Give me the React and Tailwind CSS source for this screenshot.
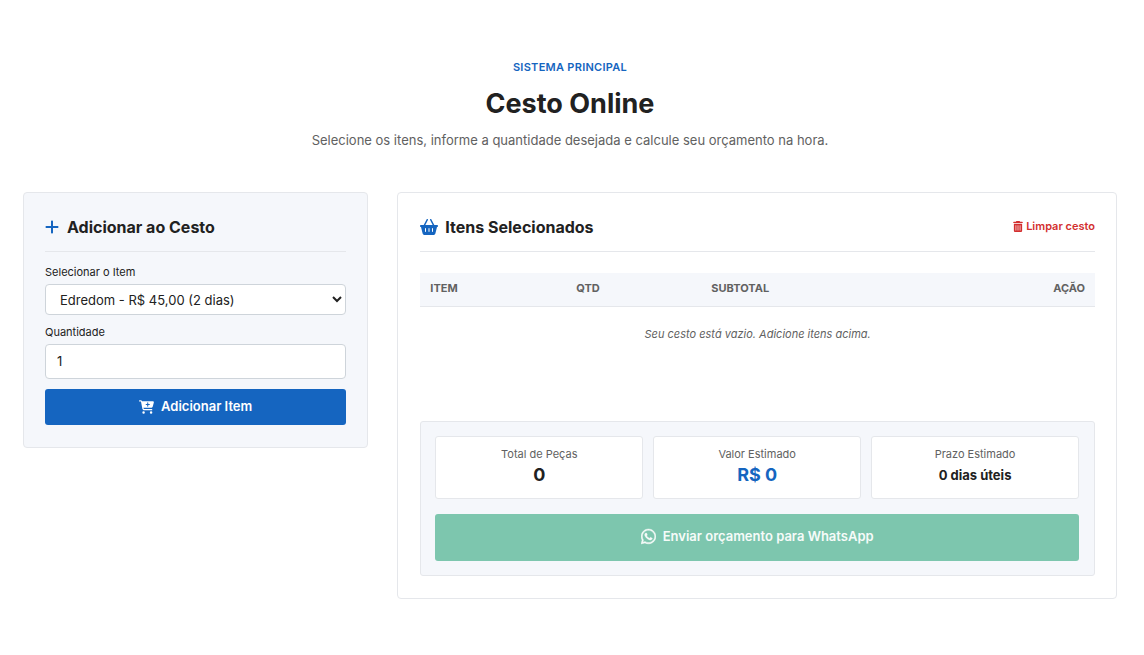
import React, { useState } from 'react';
import { FaPlus, FaBasketShopping, FaTrashCan, FaCartPlus, FaWhatsapp } from 'react-icons/fa6';

const ITEMS = [
  { id: 'edredom', name: 'Edredom', price: 45, days: 2 },
];

const formatPrice = (value) => value.toFixed(2).replace('.', ',');

function SummaryCard({ label, value, valueClass }) {
  return (
    <div className="rounded-[3px] border border-[#e5e7eb] bg-white px-2 pt-[9px] pb-[11px] text-center">
      <div className="text-[11px] leading-[17px] text-[#616161]">{label}</div>
      <div className={`leading-6 font-bold ${valueClass}`}>{value}</div>
    </div>
  );
}

export default function App() {
  const [itemId, setItemId] = useState('edredom');
  const [quantity, setQuantity] = useState(1);
  const [cart, setCart] = useState([]);

  const addItem = (e) => {
    e.preventDefault();
    const item = ITEMS.find((i) => i.id === itemId);
    const qty = Number(quantity);
    if (!item || qty < 1) return;
    setCart([...cart, { ...item, qty, key: Date.now() }]);
  };

  const removeItem = (key) => setCart(cart.filter((row) => row.key !== key));

  const pieces = cart.reduce((sum, row) => sum + row.qty, 0);
  const total = cart.reduce((sum, row) => sum + row.qty * row.price, 0);
  const days = cart.reduce((max, row) => Math.max(max, row.days), 0);

  return (
    <main className="bg-white pt-[58px] pr-[27px] pb-14 pl-[23px] font-[Inter,sans-serif] text-[#212121]">
      {/* Header */}
      <header className="mb-[42px] text-center">
        <p className="text-[11px] leading-[18px] font-semibold tracking-wide text-[#1565c0] uppercase">
          Sistema Principal
        </p>
        <h1 className="mt-2 text-[27px] leading-10 font-bold">Cesto Online</h1>
        <p className="mt-[6px] text-[13px] leading-5 text-[#616161]">
          Selecione os itens, informe a quantidade desejada e calcule seu orçamento na hora.
        </p>
      </header>

      <div className="grid items-start gap-[29px] lg:grid-cols-3">
        {/* Form */}
        <section className="rounded-[4px] border border-[#e5e7eb] bg-[#f5f7fb] p-[21px] pb-[22px]">
          <h2 className="flex items-center gap-2 border-b border-[#e5e7eb] pt-[3px] pb-[14px] text-[16px] leading-5 font-bold">
            <FaPlus className="h-4 w-[14px] text-[#1565c0]" />
            Adicionar ao Cesto
          </h2>

          <form onSubmit={addItem} className="pt-3">
            <label htmlFor="item" className="block text-[11px] leading-4">
              Selecionar o Item
            </label>
            <select
              id="item"
              value={itemId}
              onChange={(e) => setItemId(e.target.value)}
              className="mt-1 block h-[31px] w-full rounded-[4px] border border-[#ced4da] bg-white px-[10px] text-[13px]"
            >
              {ITEMS.map((item) => (
                <option key={item.id} value={item.id}>
                  {`${item.name} - R$ ${formatPrice(item.price)} (${item.days} dias)`}
                </option>
              ))}
            </select>

            <label htmlFor="quantity" className="mt-[9px] block text-[11px] leading-4">
              Quantidade
            </label>
            <input
              id="quantity"
              type="number"
              min="1"
              value={quantity}
              onChange={(e) => setQuantity(e.target.value)}
              className="mt-1 block h-[35px] w-full rounded-[4px] border border-[#ced4da] bg-white px-[11px] pb-[2px] text-[13px]"
            />

            <button
              type="submit"
              className="mt-[10px] flex h-9 w-full items-center justify-center gap-[7px] rounded-[3px] bg-[#1565c0] text-[13px] font-semibold text-white"
            >
              <FaCartPlus className="h-[14px] w-[15px]" />
              Adicionar Item
            </button>
          </form>
        </section>

        {/* Cart */}
        <section className="rounded-[4px] border border-[#e5e7eb] bg-white p-[22px] pr-[21px] lg:col-span-2">
          <div className="flex items-start justify-between border-b border-[#e5e7eb] pt-[2px] pb-[14px]">
            <h2 className="flex items-center gap-[7px] text-[16px] leading-5 font-bold">
              <FaBasketShopping className="h-4 w-[18px] text-[#1565c0]" />
              Itens Selecionados
            </h2>
            <button
              type="button"
              onClick={() => setCart([])}
              className="flex items-center gap-[3px] text-[11px] leading-[18px] font-semibold text-[#d32f2f]"
            >
              <FaTrashCan className="h-[11px] w-[10px]" />
              Limpar cesto
            </button>
          </div>

          <div className="mt-[21px] min-h-[148px]">
            <table className="w-full text-left text-[11px] leading-4">
              <thead>
                <tr className="border-b border-[#e5e7eb] bg-[#f5f7fb] text-[#616161] uppercase">
                  <th scope="col" className="w-[146px] px-[10px] pt-[7px] pb-[10px] font-bold">Item</th>
                  <th scope="col" className="w-[135px] px-[10px] pt-[7px] pb-[10px] font-bold">Qtd</th>
                  <th scope="col" className="px-[10px] pt-[7px] pb-[10px] font-bold">Subtotal</th>
                  <th scope="col" className="px-[10px] pt-[7px] pb-[10px] text-right font-bold">Ação</th>
                </tr>
              </thead>
              <tbody>
                {cart.length === 0 ? (
                  <tr>
                    <td colSpan={4} className="pt-[19px] pb-5 text-center text-[#616161] italic">
                      Seu cesto está vazio. Adicione itens acima.
                    </td>
                  </tr>
                ) : (
                  cart.map((row) => (
                    <tr key={row.key} className="border-b border-[#e5e7eb]">
                      <td className="px-[10px] py-2">{row.name}</td>
                      <td className="px-[10px] py-2">{row.qty}</td>
                      <td className="px-[10px] py-2">R$ {formatPrice(row.qty * row.price)}</td>
                      <td className="px-[10px] py-2 text-right">
                        <button type="button" aria-label="Remover" onClick={() => removeItem(row.key)} className="text-[#d32f2f]">
                          <FaTrashCan />
                        </button>
                      </td>
                    </tr>
                  ))
                )}
              </tbody>
            </table>
          </div>

          {/* Summary */}
          <div className="rounded-[3px] border border-[#e5e7eb] bg-[#f5f7fb] p-[14px] pr-[15px]">
            <div className="grid grid-cols-3 gap-[10px]">
              <SummaryCard label="Total de Peças" value={pieces} valueClass="text-[18px]" />
              <SummaryCard label="Valor Estimado" value={`R$ ${total}`} valueClass="text-[18px] text-[#1565c0]" />
              <SummaryCard label="Prazo Estimado" value={`${days} dias úteis`} valueClass="text-[13px]" />
            </div>
            <button
              type="button"
              disabled={cart.length === 0}
              className="mt-[15px] flex h-[47px] w-full items-center justify-center gap-[7px] rounded-[3px] bg-[#25a278] pb-[2px] text-[13px] font-semibold text-white disabled:bg-[#7dc6ae] disabled:text-[#f6fbf9]"
            >
              <FaWhatsapp className="h-[17px] w-[15px] stroke-current stroke-[14px]" />
              Enviar orçamento para WhatsApp
            </button>
          </div>
        </section>
      </div>
    </main>
  );
}
